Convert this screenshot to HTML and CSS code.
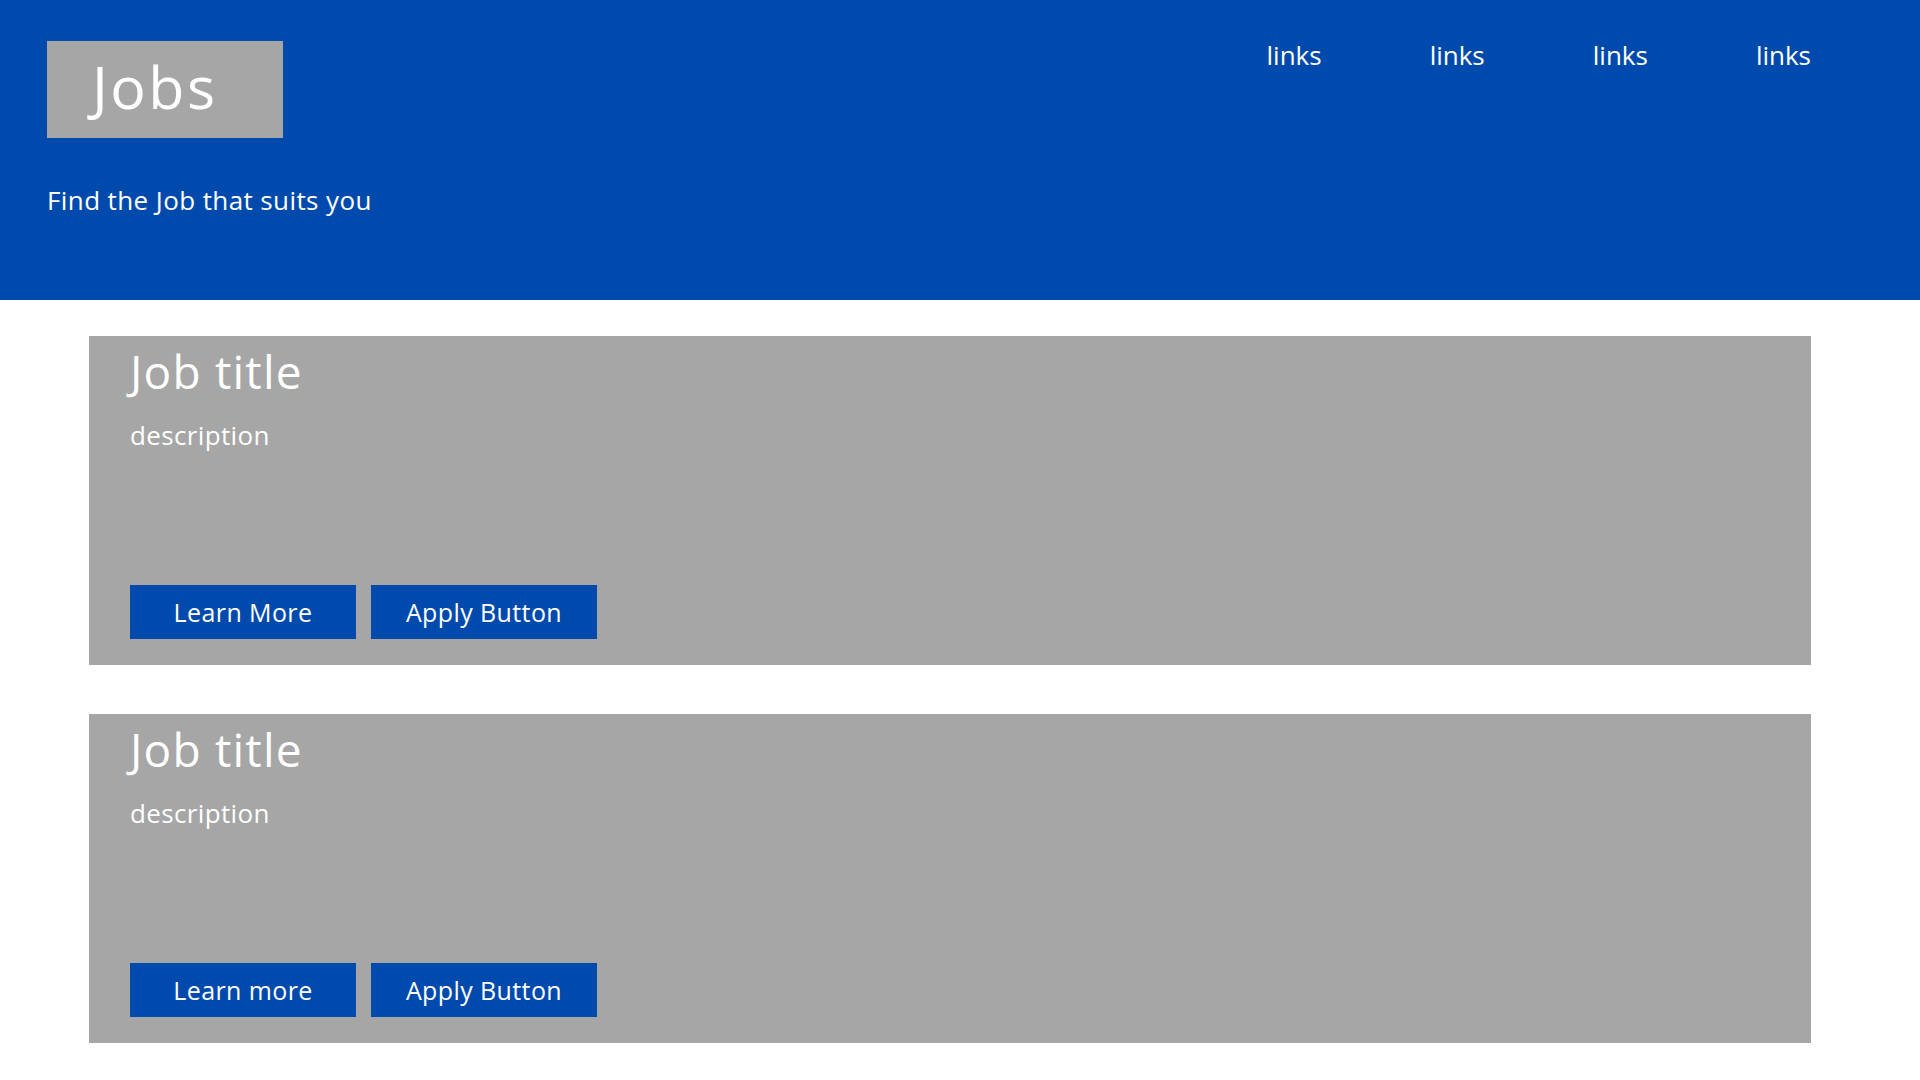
FILE: index.html
```html
<!DOCTYPE html>
<html lang="en">
<head>
<meta charset="utf-8">
<title>Jobs</title>
<link rel="stylesheet" href="styles.css">
</head>
<body>
<header class="site-header">
  <div class="brand-col">
    <div class="brand">Jobs</div>
    <p class="tagline">Find the Job that suits you</p>
  </div>
  <nav class="nav">
    <a class="nav-link" href="#">links</a>
    <a class="nav-link" href="#">links</a>
    <a class="nav-link" href="#">links</a>
    <a class="nav-link" href="#">links</a>
  </nav>
</header>
<main class="jobs">
  <section class="card">
    <h2 class="card-title">Job title</h2>
    <p class="card-desc">description</p>
    <div class="actions">
      <a class="btn" href="#">Learn More</a>
      <a class="btn" href="#">Apply Button</a>
    </div>
  </section>
  <section class="card">
    <h2 class="card-title">Job title</h2>
    <p class="card-desc">description</p>
    <div class="actions">
      <a class="btn" href="#">Learn more</a>
      <a class="btn" href="#">Apply Button</a>
    </div>
  </section>
</main>
</body>
</html>
```
FILE: styles.css
```css
* { box-sizing: border-box; }
html, body { margin: 0; padding: 0; background: #ffffff; }
body {
  font-family: "Open Sans", "Noto Sans", sans-serif;
  color: #ffffff;
}
.site-header {
  background: #004aad;
  height: 300px;
  padding: 41px 109px 0 47px;
  display: flex;
  justify-content: space-between;
  align-items: flex-start;
}
.brand {
  width: 236px;
  height: 97px;
  background: #a6a6a6;
  font-size: 59px;
  line-height: 58px;
  letter-spacing: 2.5px;
  padding: 16px 0 0 45px;
}
.tagline {
  margin: 49px 0 0 0;
  font-size: 26px;
  line-height: 26px;
  letter-spacing: 0.4px;
}
.nav {
  display: flex;
  gap: 108px;
  margin-top: 1px;
}
.nav-link {
  color: #ffffff;
  text-decoration: none;
  font-size: 26px;
  line-height: 26px;
}
.jobs {
  padding: 36px 109px 40px 89px;
  display: flex;
  flex-direction: column;
  gap: 49px;
}
.card {
  background: #a6a6a6;
  height: 329px;
  padding: 12px 41px 26px 41px;
  display: flex;
  flex-direction: column;
}
.card-title {
  margin: 0;
  font-size: 46px;
  line-height: 46px;
  font-weight: 400;
  letter-spacing: 1.2px;
}
.card-desc {
  margin: 28px 0 0 0;
  font-size: 26px;
  line-height: 26px;
  letter-spacing: 0.35px;
}
.actions {
  margin-top: auto;
  display: flex;
  gap: 15px;
}
.btn {
  width: 226px;
  height: 54px;
  background: #004aad;
  color: #ffffff;
  text-decoration: none;
  font-size: 25px;
  line-height: 54px;
  letter-spacing: 0.4px;
  text-align: center;
}
```
